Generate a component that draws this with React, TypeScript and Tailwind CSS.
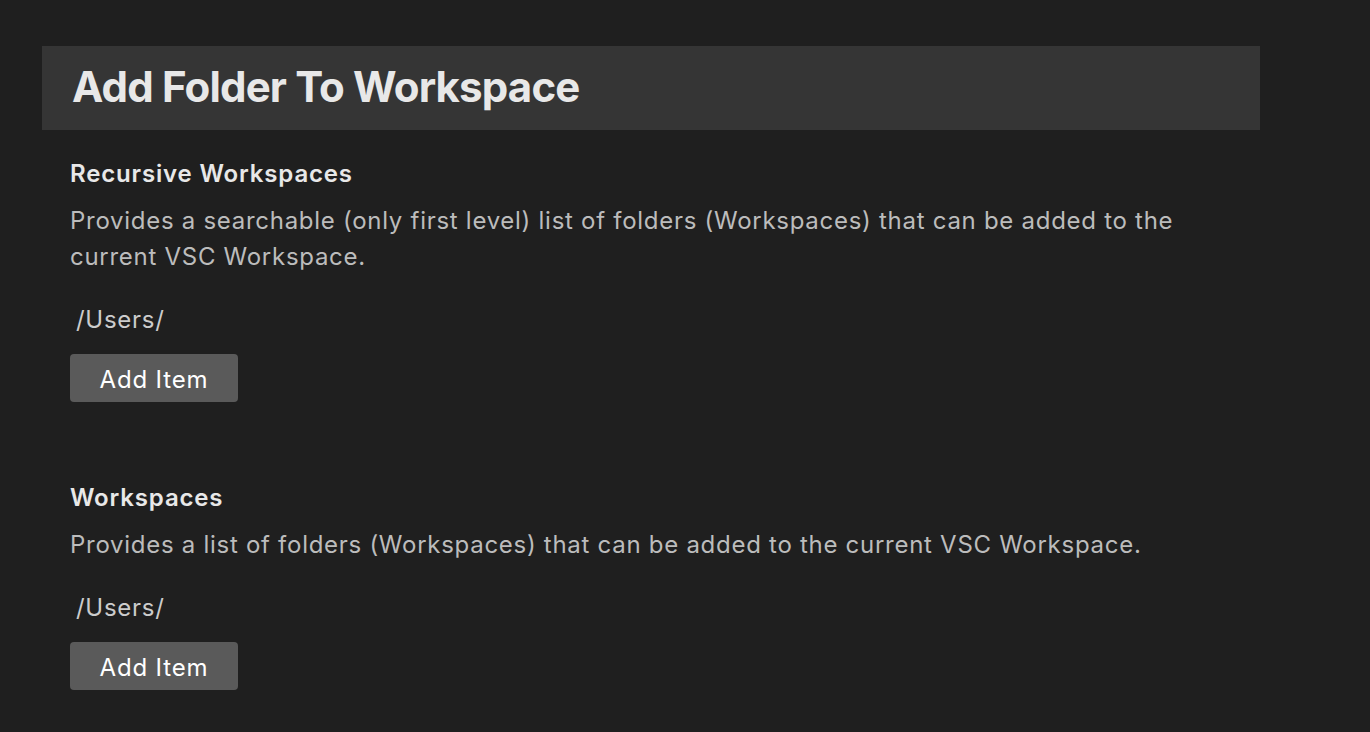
import React from "react";

const sections = [
    {
        title: "Recursive Workspaces",
        description:
            "Provides a searchable (only first level) list of folders (Workspaces) that can be added to the current VSC Workspace.",
        paths: ["/Users/"],
    },
    {
        title: "Workspaces",
        description: "Provides a list of folders (Workspaces) that can be added to the current VSC Workspace.",
        paths: ["/Users/"],
    },
];

export default function App() {
    return (
        <div
            className="min-h-screen w-full bg-[#1f1f1f] pt-[46px] pl-[42px]"
            style={{ fontFamily: "Inter, 'Noto Sans', sans-serif" }}
        >
            <div className="w-[1218px]">
                {/* header bar */}
                <div className="h-[84px] bg-[#353535] px-[30px] pb-[3px] flex items-center">
                    <h1 className="text-[42px] font-bold tracking-[-0.02em] text-[#e8e8e8] leading-none">
                        Add Folder To Workspace
                    </h1>
                </div>

                <div className="pl-[28px] pt-[26px]">
                    {sections.map((s, i) => (
                        <section key={s.title} className={i > 0 ? "mt-[78px]" : ""}>
                            <h2 className="text-[24px] font-semibold tracking-[0.035em] leading-[36px] text-[#e8e8e8]">
                                {s.title}
                            </h2>
                            <p className="mt-[11px] text-[24px] tracking-[0.03em] leading-[36px] text-[#bcbcbc]">
                                {s.description}
                            </p>
                            <div className="mt-[27px] flex flex-col">
                                {s.paths.map((p) => (
                                    <div
                                        key={p}
                                        className="pl-[6px] text-[24px] tracking-[0.03em] leading-[36px] text-[#cccccc]"
                                    >
                                        {p}
                                    </div>
                                ))}
                            </div>
                            <button className="mt-[16px] w-[168px] h-[48px] rounded-[4px] bg-[#5a5a5a] text-white text-[24px] tracking-[0.035em] leading-none pt-[3px] flex items-center justify-center">
                                Add Item
                            </button>
                        </section>
                    ))}
                </div>
            </div>
        </div>
    );
}
